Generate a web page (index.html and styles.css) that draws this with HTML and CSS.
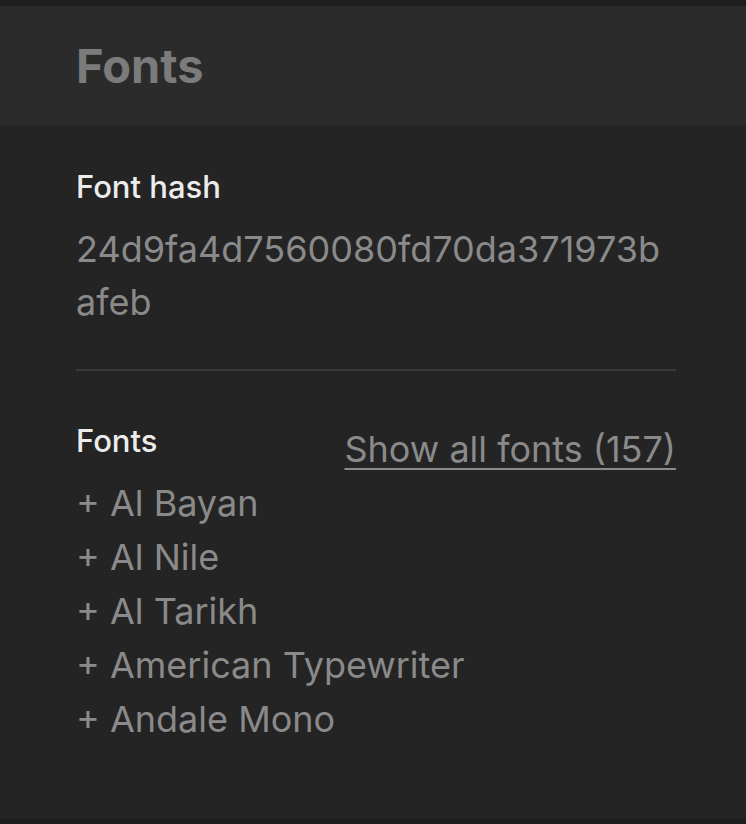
FILE: index.html
```html
<!DOCTYPE html>
<html lang="en">
<head>
<meta charset="utf-8">
<title>Fonts</title>
<link rel="stylesheet" href="styles.css">
</head>
<body>
<div class="panel">
  <header class="panel-header">
    <h1 class="title">Fonts</h1>
  </header>
  <main class="content">
    <section class="hash-section">
      <h2 class="label">Font hash</h2>
      <p class="hash">24d9fa4d7560080fd70da371973bafeb</p>
    </section>
    <hr class="divider">
    <section class="fonts-section">
      <div class="fonts-head">
        <h2 class="label">Fonts</h2>
        <a class="show-all" href="#">Show all fonts (157)</a>
      </div>
      <ul class="font-list">
        <li>+ Al Bayan</li>
        <li>+ Al Nile</li>
        <li>+ Al Tarikh</li>
        <li>+ American Typewriter</li>
        <li>+ Andale Mono</li>
      </ul>
    </section>
  </main>
</div>
</body>
</html>
```
FILE: styles.css
```css
html, body {
  margin: 0;
  padding: 0;
}
body {
  background: #1e1e1e;
  font-family: Inter, "Noto Sans", sans-serif;
  width: 746px;
  height: 824px;
  overflow: hidden;
}
.panel {
  margin-top: 6px;
  height: 812px;
  background: #242424;
}
.panel-header {
  height: 119px;
  background: #2b2b2b;
  display: flex;
  align-items: center;
  padding-left: 76px;
  box-sizing: border-box;
}
.title {
  margin: 0;
  font-size: 47px;
  font-weight: 700;
  color: #7b7b7b;
  line-height: 1;
}
.content {
  padding: 44px 70px 0 76px;
}
.label {
  margin: 0;
  font-size: 31px;
  line-height: 36px;
  font-weight: 500;
  color: #ececec;
}
.hash {
  margin: 18px 0 0;
  font-size: 36px;
  line-height: 53px;
  color: #8a8a8a;
  word-break: break-all;
}
.divider {
  margin: 40px 0 0;
  border: 0;
  height: 2px;
  background: #3a3a3a;
}
.fonts-head {
  margin-top: 52px;
  display: flex;
  justify-content: space-between;
  align-items: flex-start;
}
.show-all {
  font-size: 36px;
  line-height: 53px;
  color: #8a8a8a;
  text-decoration: underline;
  text-underline-offset: 6px;
  text-decoration-thickness: 2px;
}
.font-list {
  list-style: none;
  margin: 0;
  padding: 0;
}
.font-list li {
  font-size: 36px;
  line-height: 54px;
  color: #8a8a8a;
}
```
